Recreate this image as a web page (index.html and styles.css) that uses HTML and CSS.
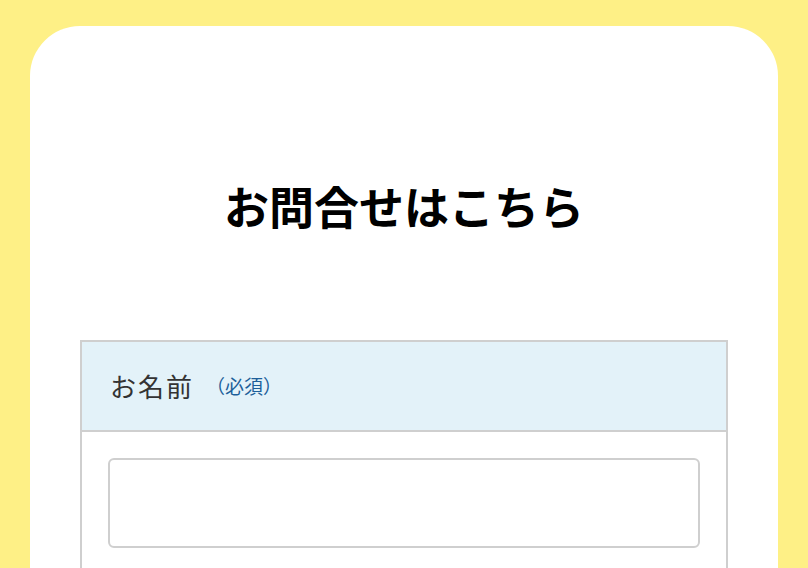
FILE: index.html
```html
<!DOCTYPE html>
<html lang="ja">
<head>
<meta charset="utf-8">
<link rel="stylesheet" href="styles.css">
</head>
<body>
<main class="card">
  <h1 class="title">お問合せはこちら</h1>
  <div class="form-table">
    <div class="row-head">
      <span class="label">お名前</span><span class="req">（必須）</span>
    </div>
    <div class="row-body">
      <input class="field" type="text">
    </div>
  </div>
</main>
</body>
</html>
```
FILE: styles.css
```css
html, body {
  margin: 0;
  height: 100%;
}
body {
  background: #fef086;
  padding: 26px 30px 0;
  box-sizing: border-box;
  overflow: hidden;
  font-family: "Noto Sans CJK JP", "Noto Sans", sans-serif;
}
.card {
  background: #fff;
  border-radius: 50px 50px 0 0;
  padding: 146px 50px 0;
  min-height: 700px;
}
.title {
  margin: 0 0 100px;
  font-size: 45px;
  line-height: 1.5;
  font-weight: 700;
  text-align: center;
  color: #000;
}
.form-table {
  border: 2px solid #cfcfcf;
}
.row-head {
  background: #e3f2f9;
  height: 88px;
  display: flex;
  align-items: center;
  padding: 0 28px;
  border-bottom: 2px solid #cfcfcf;
}
.label {
  font-size: 26px;
  color: #333;
  letter-spacing: 2px;
  font-weight: 400;
}
.req {
  font-size: 19px;
  color: #1d5f9a;
  margin-left: 12px;
}
.row-body {
  padding: 26px 26px 60px;
}
.field {
  display: block;
  width: 100%;
  height: 90px;
  box-sizing: border-box;
  border: 2px solid #cfcfcf;
  border-radius: 6px;
  background: #fff;
}
```
